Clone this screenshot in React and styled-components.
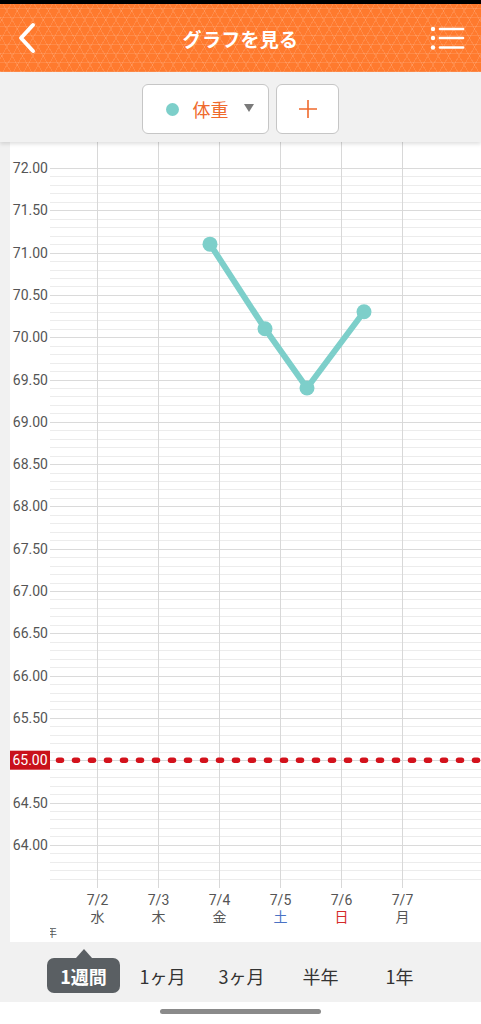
import React from "react";
import styled, { createGlobalStyle } from "styled-components";

const GlobalStyle = createGlobalStyle`
  html, body { margin: 0; padding: 0; background: #f1f1f1; }
  body { font-family: Roboto, "Noto Sans CJK JP", sans-serif; }
  * { box-sizing: border-box; }
`;

const Page = styled.div`
  width: 481px;
  height: 1024px;
  overflow: hidden;
  display: flex;
  flex-direction: column;
  background: #f1f1f1;
`;

const StatusStrip = styled.div`
  height: 4px;
  background: #000;
`;

const Header = styled.header`
  height: 68px;
  display: flex;
  align-items: center;
  justify-content: space-between;
  padding: 0 16px 0 16px;
  background-color: #ff7a2e;
  background-image:
    repeating-linear-gradient(0deg, rgba(255,255,255,0.12) 0 1px, transparent 1px 9px),
    repeating-linear-gradient(60deg, rgba(255,255,255,0.12) 0 1px, transparent 1px 9px),
    repeating-linear-gradient(120deg, rgba(255,255,255,0.12) 0 1px, transparent 1px 9px);
`;

const IconButton = styled.div`
  width: 48px;
  height: 40px;
  display: flex;
  align-items: center;
  justify-content: ${(p) => (p.$right ? "flex-end" : "flex-start")};
`;

const Title = styled.h1`
  flex: 1;
  margin: 0;
  text-align: center;
  color: #fff;
  font-family: "Noto Sans CJK JP", sans-serif;
  font-size: 19px;
  font-weight: 700;
  letter-spacing: 0.3px;
`;

const Toolbar = styled.div`
  position: relative;
  z-index: 1;
  height: 70px;
  display: flex;
  justify-content: center;
  align-items: flex-start;
  gap: 7px;
  padding-top: 12px;
  background: #f1f1f1;
  box-shadow: 0 2px 4px rgba(0, 0, 0, 0.13);
`;

const OutlineButton = styled.div`
  height: 50px;
  width: ${(p) => p.$w}px;
  display: flex;
  align-items: center;
  justify-content: center;
  background: #fff;
  border: 1px solid #c6c6c6;
  border-radius: 6px;
`;

const SelectInner = styled.div`
  display: flex;
  align-items: center;
  padding-left: 8px;
`;

const Dot = styled.span`
  width: 13px;
  height: 13px;
  border-radius: 50%;
  background: #7dcfca;
  margin-right: 14px;
`;

const SelectLabel = styled.span`
  color: #ef6a2c;
  font-family: "Noto Sans CJK JP", sans-serif;
  font-size: 18px;
  font-weight: 400;
  margin-right: 15px;
`;

const Caret = styled.span`
  width: 0;
  height: 0;
  border-left: 5px solid transparent;
  border-right: 5px solid transparent;
  border-top: 8px solid #7a7a7a;
  margin-top: -2px;
`;

const ChartPanel = styled.div`
  margin-left: 10px;
  height: 800px;
  background: #fff;
`;

const ChartSvg = styled.svg`
  display: block;
`;

const TabBar = styled.nav`
  height: 60px;
  display: flex;
  align-items: flex-start;
  padding: 16px 0 0 44px;
  background: #f1f1f1;
`;

const Tab = styled.div`
  position: relative;
  width: 73px;
  height: 35px;
  margin: 0 3px;
  display: flex;
  align-items: center;
  justify-content: center;
  border-radius: 7px;
  font-family: "Noto Sans CJK JP", sans-serif;
  font-size: 18px;
  font-weight: ${(p) => (p.$active ? 700 : 400)};
  color: ${(p) => (p.$active ? "#fff" : "#333")};
  background: ${(p) => (p.$active ? "#5a5f63" : "transparent")};
  &::before {
    content: "";
    display: ${(p) => (p.$active ? "block" : "none")};
    position: absolute;
    top: -9px;
    left: 50%;
    margin-left: -8px;
    border-left: 8px solid transparent;
    border-right: 8px solid transparent;
    border-bottom: 9px solid #5a5f63;
  }
`;

const HomeArea = styled.div`
  height: 22px;
  background: #fff;
  display: flex;
  justify-content: center;
  padding-top: 7px;
`;

const HomeBar = styled.div`
  width: 161px;
  height: 5px;
  border-radius: 3px;
  background: #8a8a8a;
`;

const Y = (v) => 26 + (72 - v) * 84.6;

const dates = [
  ["7/2", "水", "#555"],
  ["7/3", "木", "#555"],
  ["7/4", "金", "#555"],
  ["7/5", "土", "#4a72c4"],
  ["7/6", "日", "#d42a2a"],
  ["7/7", "月", "#555"],
];

const points = [
  [200, Y(71.1)],
  [255, Y(70.1)],
  [297, Y(69.4)],
  [354, Y(70.3)],
];

function Chart() {
  const hLines = [];
  for (let i = 0; i <= 84; i++) {
    const v = 72 - i * 0.1;
    const y = Math.round(Y(v)) + 0.5;
    const major = i % 5 === 0;
    hLines.push(
      <line
        key={"h" + i}
        x1={40}
        x2={471}
        y1={y}
        y2={y}
        stroke={major ? "#dadada" : "#ececec"}
        strokeWidth={1}
      />
    );
  }
  const labels = [];
  for (let i = 0; i <= 16; i++) {
    const v = 72 - i * 0.5;
    if (Math.abs(v - 65) < 0.01) continue;
    labels.push(
      <text
        key={"l" + i}
        x={38}
        y={Y(v) + 5}
        textAnchor="end"
        fontSize="14"
        fill="#555"
        fontFamily="Roboto, sans-serif"
      >
        {v.toFixed(2)}
      </text>
    );
  }
  const red = Y(65);
  return (
    <ChartSvg width="471" height="800" viewBox="0 0 471 800">
      <defs>
        <clipPath id="plotClip">
          <rect x="40" y="0" width="431" height="800" />
        </clipPath>
      </defs>
      {hLines}
      {dates.map((d, k) => {
        const x = 87 + 61 * k + 0.5;
        return (
          <g key={"v" + k}>
            <line x1={x} x2={x} y1={0} y2={746} stroke="#d8d8d8" strokeWidth="1" />
            <text x={x} y={763} textAnchor="middle" fontSize="14" fill="#555" fontFamily="Roboto, sans-serif">
              {d[0]}
            </text>
            <text x={x} y={780} textAnchor="middle" fontSize="14" fill={d[2]} fontFamily="'Noto Sans CJK JP', sans-serif">
              {d[1]}
            </text>
          </g>
        );
      })}
      <g clipPath="url(#plotClip)">
        <text x="36" y="795" fontSize="11" fill="#555" fontFamily="'Noto Sans CJK JP', sans-serif">
          年
        </text>
      </g>
      {labels}
      <line
        x1="48.5"
        x2="471"
        y1={red}
        y2={red}
        stroke="#d3121c"
        strokeWidth="5.5"
        strokeDasharray="3 13"
        strokeLinecap="round"
      />
      <rect x="0" y={red - 9.5} width="40" height="19" fill="#c9111b" />
      <text x="20" y={red + 5} textAnchor="middle" fontSize="14" fill="#fff" fontFamily="Roboto, sans-serif">
        65.00
      </text>
      <polyline
        points={points.map((p) => p.join(",")).join(" ")}
        fill="none"
        stroke="#7dcfca"
        strokeWidth="6"
        strokeLinejoin="round"
      />
      {points.map((p, i) => (
        <circle key={"p" + i} cx={p[0]} cy={p[1]} r="7.5" fill="#7dcfca" />
      ))}
    </ChartSvg>
  );
}

export default function App() {
  return (
    <Page>
      <GlobalStyle />
      <StatusStrip />
      <Header>
        <IconButton>
          <svg width="22" height="32" viewBox="0 0 22 32">
            <path d="M17 3 L5 16 L17 29" fill="none" stroke="#fff" strokeWidth="4" strokeLinecap="round" strokeLinejoin="round" />
          </svg>
        </IconButton>
        <Title>グラフを見る</Title>
        <IconButton $right>
          <svg width="36" height="26" viewBox="0 0 36 26">
            <g fill="#fff">
              <circle cx="4" cy="4" r="2.2" />
              <circle cx="4" cy="13" r="2.2" />
              <circle cx="4" cy="22.5" r="2.2" />
            </g>
            <g stroke="#fff" strokeWidth="2.6" strokeLinecap="round">
              <line x1="11" x2="34" y1="4" y2="4" />
              <line x1="11" x2="34" y1="13" y2="13" />
              <line x1="11" x2="34" y1="22.5" y2="22.5" />
            </g>
          </svg>
        </IconButton>
      </Header>
      <Toolbar>
        <OutlineButton $w={127}>
          <SelectInner>
            <Dot />
            <SelectLabel>体重</SelectLabel>
            <Caret />
          </SelectInner>
        </OutlineButton>
        <OutlineButton $w={63}>
          <svg width="20" height="20" viewBox="0 0 20 20">
            <path d="M10 1 V19 M1 10 H19" stroke="#ef6a2c" strokeWidth="1.6" fill="none" />
          </svg>
        </OutlineButton>
      </Toolbar>
      <ChartPanel>
        <Chart />
      </ChartPanel>
      <TabBar>
        <Tab $active>1週間</Tab>
        <Tab>1ヶ月</Tab>
        <Tab>3ヶ月</Tab>
        <Tab>半年</Tab>
        <Tab>1年</Tab>
      </TabBar>
      <HomeArea>
        <HomeBar />
      </HomeArea>
    </Page>
  );
}
